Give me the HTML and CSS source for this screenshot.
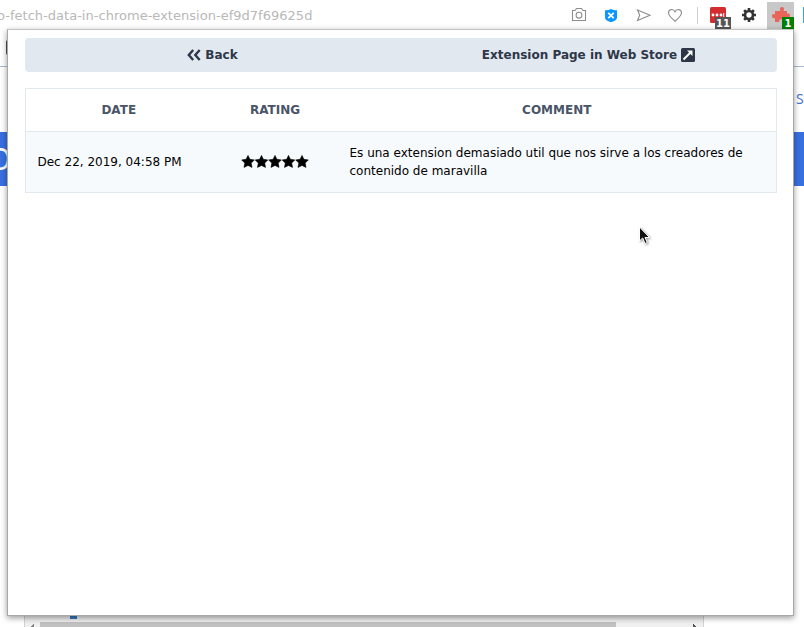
FILE: index.html
```html
<!DOCTYPE html>
<html lang="en">
<head>
<meta charset="utf-8">
<title>Extension reviews</title>
<link rel="stylesheet" href="styles.css">
</head>
<body>
<svg class="defs" width="0" height="0"><defs><path id="star" stroke="#000" stroke-width=".6" stroke-linejoin="round" d="M7 0.4 L8.9 4.3 L13.3 4.9 L10.2 8.1 L11 12.4 L7 10.4 L3 12.4 L3.8 8.1 L0.7 4.9 L5.1 4.3Z"/></defs></svg>
<div class="browser">
  <header class="toolbar">
    <span class="url">o-fetch-data-in-chrome-extension-ef9d7f69625d</span>
    <svg class="tools" width="244" height="30" viewBox="560 0 244 30">
      <g fill="none" stroke="#8c8c8c" stroke-width="1.1">
        <path d="M573.5 10.5H575L576.5 8.5H581.5L583 10.5H585.5V20.5H572.5V10.5Z"/>
        <circle cx="579" cy="15.2" r="2.9"/>
        <path d="M637.5 10L650 15.2L637.5 20.5L639.7 15.2Z"/>
        <path d="M675 21.3C672 18.5 668.5 16 668.5 12.8C668.5 9 673.5 8.4 675 11.8C676.5 8.4 681.5 9 681.5 12.8C681.5 16 678 18.5 675 21.3Z"/>
      </g>
      <path fill="#0a96ff" d="M605 10.2Q608 10.6 611 9Q614 10.6 617 10.2V17.5Q617 20.5 611 22.2Q605 20.5 605 17.5Z"/>
      <path stroke="#fff" stroke-width="1.7" d="M608.3 12.8L613.7 18.2M613.7 12.8L608.3 18.2"/>
      <path stroke="#d0d0d0" d="M697.5 7V24"/>
      <rect x="710" y="7" width="16" height="16" rx="1.5" fill="#d32d2f"/>
      <g fill="#fff"><circle cx="713" cy="15" r="1.4"/><circle cx="717" cy="15" r="1.4"/><circle cx="721" cy="15" r="1.4"/><rect x="723.2" y="13" width="1" height="4"/></g>
      <rect x="715" y="17" width="16" height="12" fill="#555"/>
      <text class="badge" x="723" y="27">11</text>
      <g fill="none" stroke="#333">
        <circle cx="749" cy="15" r="4" stroke-width="2.7"/>
        <path stroke-width="2.6" d="M749 8V10.8M749 19.2V22M742 15H744.8M753.2 15H756M744.1 10.1L746 12M752 18L753.9 19.9M744.1 19.9L746 18M752 12L753.9 10.1"/>
      </g>
      <rect x="767" y="2" width="27" height="28" fill="#c8c8c8"/>
      <path fill="#e9655b" d="M775 11H780.5C779.3 9 780 7 782 7C784 7 784.7 9 783.5 11H787V14C788.5 13 790 13.5 790 15.5C790 17.5 788.5 18 787 17V22H783C783.8 20 782.5 19.3 781 19.3C779.5 19.3 778.7 20.5 779.5 22H775V18C773 19 772 17.5 772 16C772 14.4 773 13.5 775 14.5Z"/>
      <rect x="782" y="17" width="12" height="12" fill="#008000"/>
      <text class="badge" x="788" y="27">1</text>
      <rect x="803" y="7" width="1" height="16" fill="#2fa9df"/>
    </svg>
  </header>
  <div class="bookmarks"><i class="bookmark"></i></div>
  <div class="nav"><span>S</span></div>
  <div class="hero"><span>O</span></div>
  <div class="page"></div>
  <div class="frame">
    <i class="chip"></i>
    <div class="scroll">
      <svg width="14" height="6"><path fill="#858585" d="M9 2V6H6V4H7V3H8V2Z"/></svg>
      <i class="thumb"></i>
      <svg width="14" height="6"><path fill="#505050" d="M4 2H5V3H6V4H7V6H4Z"/></svg>
    </div>
  </div>
</div>

<main class="popup">
  <nav class="actions">
    <a class="action"><svg class="back-icon" width="14" height="12" viewBox="0 0 14 12"><path d="M6.2 1L1.8 6L6.2 11M12.7 1L8.3 6L12.7 11" fill="none" stroke="#2d3748" stroke-width="2.4"/></svg>Back</a>
    <a class="action">Extension Page in Web Store<svg class="link-icon" width="14" height="14" viewBox="0 0 14 14"><rect width="14" height="14" rx="1.5" fill="#2d3748"/><path d="M2.5 11.5L9.5 4.5" stroke="#fff" stroke-width="1.9"/><path d="M6 2.5H11.5V8Z" fill="#fff"/></svg></a>
  </nav>
  <table class="reviews">
    <thead><tr><th class="date">DATE</th><th class="rating">RATING</th><th>COMMENT</th></tr></thead>
    <tbody><tr>
      <td class="when">Dec 22, 2019, 04:58 PM</td>
      <td class="stars"><svg width="68" height="13" viewBox="0 0 68 13"><use href="#star"/><use href="#star" x="13.5"/><use href="#star" x="27"/><use href="#star" x="40.5"/><use href="#star" x="54"/></svg></td>
      <td>Es una extension demasiado util que nos sirve a los creadores de contenido de maravilla</td>
    </tr></tbody>
  </table>
</main>
<svg class="cursor" width="14" height="20" viewBox="0 0 14 20"><path d="M1.5 1V15L4.7 12L7 17.5L9.3 16.5L7 11.5H11.5Z" fill="#111" stroke="#fff" stroke-width="1"/></svg>
</body>
</html>
```

FILE: styles.css
```css
* { box-sizing: border-box; }
body {
  margin: 0;
  height: 627px;
  overflow: hidden;
  position: relative;
  background: #fff;
  font-family: "DejaVu Sans", sans-serif;
  font-size: 12px;
}
.defs { position: absolute; }
.browser { height: 627px; display: flex; flex-direction: column; }
.toolbar { height: 30px; display: flex; justify-content: space-between; flex: none; }
.url { font-size: 13px; line-height: 32px; color: #b8b8b8; margin-left: -3px; letter-spacing: .02px; white-space: nowrap; }
.tools { flex: none; }
.badge { fill: #fff; font: bold 10px "DejaVu Sans", sans-serif; text-anchor: middle; }
.bookmarks { height: 37px; flex: none; padding: 10px 0 0 6px; border-bottom: 1px solid #a9bbd0; }
.bookmark { display: block; width: 14px; height: 15px; border-radius: 2px; background: #4b5056; }
.nav { height: 65px; flex: none; display: flex; align-items: center; padding: 0 0 2px 796px; font: 14px "Noto Sans", sans-serif; color: #4777d4; }
.hero { height: 54px; flex: none; background: #3870e0; color: #fff; font: 30px/54px "Noto Sans", sans-serif; overflow: hidden; }
.hero span { margin-left: -12px; }
.page { height: 414px; flex: none; background: #fff; }
.frame { width: 680px; height: 27px; margin-left: 24px; background: #f0f0f0; border: solid #d4d4d4; border-width: 0 1px; }
.chip { display: block; width: 7px; height: 19px; margin-left: 45px; background: #3579c0; }
.scroll { display: flex; height: 8px; padding-top: 3px; }
.thumb { width: 577px; height: 6px; margin: 0 73px 0 1px; background: #c1c1c1; }
.scroll svg { flex: none; }
.popup {
  position: absolute;
  left: 7px;
  top: 29px;
  width: 787px;
  height: 587px;
  padding: 8px 16px 0 17px;
  background: #fff;
  border: 1px solid #a8a8a8;
  border-top-color: #c4c4c4;
  box-shadow: 0 2px 6px rgba(0, 0, 0, .4);
}
.actions { display: flex; height: 34px; background: #e2e8f0; border-radius: 4px; }
.action { width: 50%; display: flex; align-items: center; justify-content: center; padding-right: 1px; font-weight: bold; color: #2d3748; }
.back-icon { margin-right: 4px; }
.link-icon { margin-left: 4px; }
.reviews { width: 752px; margin-top: 16px; border: 1px solid #e2e8f0; border-collapse: collapse; table-layout: fixed; line-height: 18px; color: #000; }
.reviews th { height: 43px; padding: 0 12px; color: #4a5568; }
.reviews .date { width: 187px; padding-right: 13px; }
.rating { width: 125px; }
.reviews td { height: 61px; padding: 0 12px; background: #f7fafc; border-top: 1px solid #e2e8f0; }
.reviews .when { padding-left: 11.5px; }
.reviews .stars { text-align: center; padding: 0 0 1px; }
.stars svg { display: block; margin: 0 auto; }
.cursor { position: absolute; left: 638px; top: 226px; filter: drop-shadow(1px 1px 1px rgba(0, 0, 0, .4)); }
```
